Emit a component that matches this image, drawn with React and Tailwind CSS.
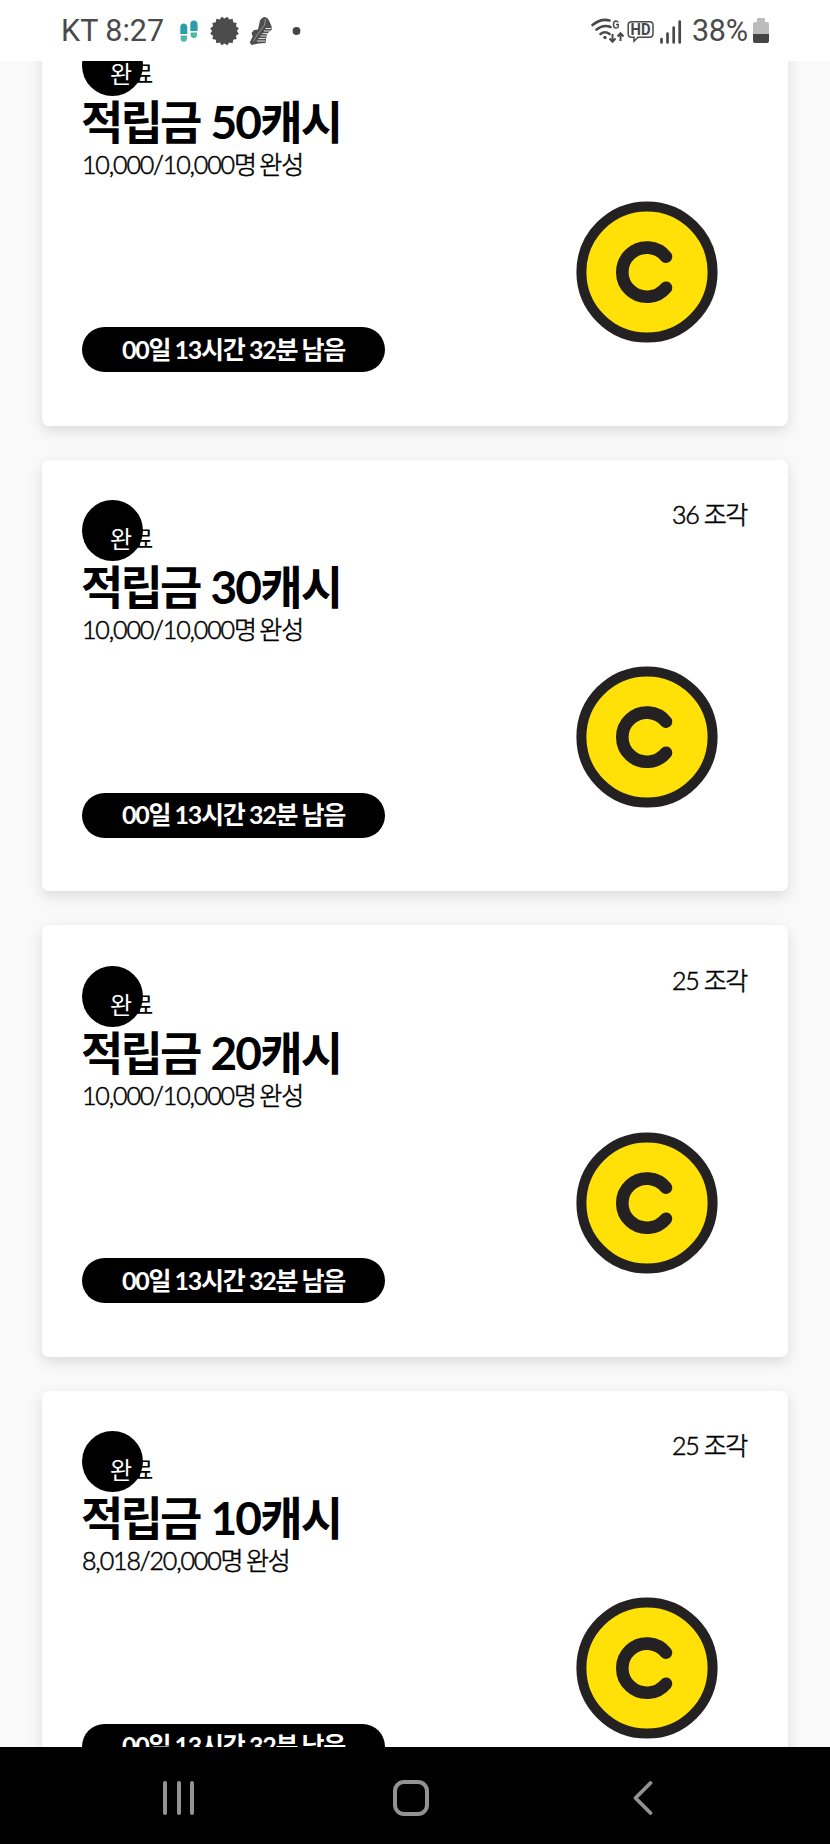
const rewards = [
  { cash: 50, pieces: null, progress: "10,000/10,000" },
  { cash: 30, pieces: 36, progress: "10,000/10,000" },
  { cash: 20, pieces: 25, progress: "10,000/10,000" },
  { cash: 10, pieces: 25, progress: "8,018/20,000" },
];

function Coin() {
  return (
    <svg className="size-[142px]" viewBox="-71 -71 142 142" fill="none">
      <circle r="65.6" fill="#ffe108" stroke="#242122" strokeWidth="10" />
      <path
        d="M19 -15.300A24.600 24.600 0 1 0 19 15.700"
        stroke="#242122"
        strokeWidth="12.600"
        strokeLinecap="round"
      />
    </svg>
  );
}

function RewardCard({ cash, pieces, progress }) {
  return (
    <article className="flex h-[431.8px] shrink-0 justify-between rounded-[7px] bg-white px-10 pt-[40.5px] shadow-[0_5px_14px_rgba(0,0,0,0.12)]">
      <div className="flex flex-col items-start whitespace-nowrap">
        <div className="h-[61px] w-[61px] rounded-full bg-black pt-[21px] pl-[28px] text-[24px] leading-[36px] tracking-[-0.04em] text-black">
          <span className="text-white">완</span>료
        </div>
        <h2 className="-ml-px h-[51px] text-[46px] leading-[51px] font-bold tracking-[-0.04em] [word-spacing:1.5px]">
          <span className="tracking-[-0.06em]">적립금</span> {cash}캐시
        </h2>
        <p className="h-9 text-[25px] leading-[35px] font-light tracking-[-0.046em] [-webkit-text-stroke:0.55px_black] [word-spacing:-2px]">
          {progress}명 완성
        </p>
        <div className="mt-[144.5px] flex h-[45px] w-[303px] items-center justify-center rounded-full bg-black pb-px text-[25px] leading-none font-bold tracking-[-0.05em] text-white [word-spacing:-0.5px]">
          00일 13시간 32분 남음
        </div>
      </div>
      <div className="flex flex-col items-end">
        <p className="mr-px h-[166px] text-[25px] leading-[29px] font-light tracking-[-0.055em] [-webkit-text-stroke:0.55px_black]">
          {pieces && `${pieces} 조각`}
        </p>
        <div className="mr-[30px]">
          <Coin />
        </div>
      </div>
    </article>
  );
}

const badge = Array.from({ length: 32 }, (_, i) => {
  const r = i % 2 ? 12.4 : 14.6;
  const a = ((i + 1) * Math.PI) / 16;
  return `${(r * Math.cos(a)).toFixed(2)},${(r * Math.sin(a)).toFixed(2)}`;
}).join(" ");

function StatusBar() {
  return (
    <header className="flex h-[61px] shrink-0 items-center justify-between bg-white pr-[61px] pl-[61px] font-[Roboto,sans-serif] text-[30.5px] text-[#4a4a4a]">
      <div className="flex items-center">
        <span className="w-[119px] pt-px whitespace-nowrap">KT 8:27</span>
        <svg className="h-[30px] w-[122px]" viewBox="180 15 122 30">
          <g fill="#2c9dac">
            <path d="M180.300 33V26q0-3.500 3.500-3.500T187.300 27v6z" />
            <path d="M190.300 30V23q0-3.500 3.600-3.500T197.600 24v6z" />
          </g>
          <g fill="#50b7a5">
            <path d="M180.600 34.500h6.400v2.700a3.200 3.500 0 0 1-6.400 0z" />
            <path d="M190.600 31.500h6.400v2.200a3.200 3.300 0 0 1-6.400 0z" />
          </g>
          <polygon points={badge} transform="translate(224.500 30)" fill="#4c4c4c" />
          <path
            d="M260 19.500q2-3.500 5-3.500 3 .5 4 3.500l2.500 5.500.3 3.500-5 4.500-1.300 9-7 .5-7 1.500-1.800-2.500 3-6-1.200-3.500 2.500-3 4-.5z"
            fill="#4f4f4f"
          />
          <path
            d="M265.500 27.500h5.500M264 30h6M262.500 32.500h4.500M260.500 35h5.500M258.500 37.500h7M257 40h8"
            stroke="#e2e2e2"
            strokeWidth="1.200"
          />
          <path d="M265.500 18l-1 6-6 8-5 8" fill="none" stroke="#a0a0a0" strokeWidth=".9" />
          <circle cx="296.500" cy="30" r="3.900" fill="#444" />
        </svg>
      </div>
      <div className="flex items-center">
        <svg className="h-[30px] w-[98px]" viewBox="590 15 98 30" fill="none" stroke="#484848">
          <g strokeWidth="2.600" strokeLinecap="round">
            <path d="M592.500 24q9-7 17-4.500M596.500 28.500q7-5.500 14-2.500M600.500 33q4.500-3.500 9 0" />
          </g>
          <circle cx="605" cy="36.500" r="1.700" fill="#484848" stroke="none" />
          <path d="M612.500 33v7.500m-3-3 3 3.300 3-3.300M620.500 40v-7.500m-3 3 3-3.300 3 3.300" strokeWidth="2" />
          <path
            d="M618.200 21.300q-1-1.300-2.300-1.300-2.400 0-2.400 3.500t2.400 3.500q1.900 0 2.300-1v-2.600H616"
            strokeWidth="1.500"
          />
          <path
            d="M631.500 20.700h18q3.500 0 3.500 3.500v8.500q0 3.500-3.500 3.500H638l-4 4v-4h-2.500q-3.300 0-3.300-3.500v-8.500q0-3.500 3.300-3.500z"
            strokeWidth="1.500"
          />
          <text
            x="630.500"
            y="34.300"
            textLength="20"
            lengthAdjust="spacingAndGlyphs"
            className="fill-[#484848] stroke-none font-[Roboto,sans-serif] text-[16px] font-bold"
          >
            HD
          </text>
          <path d="M661.500 38v3.500M667.500 32.500v9M673.700 26.500v15M679.700 20.500v21" strokeWidth="2.700" strokeLinecap="round" />
        </svg>
        <span className="w-[65px] pt-px pl-1 tracking-[-0.3px]">38%</span>
        <div className="flex flex-col items-center">
          <div className="h-1 w-2 rounded-t-[1px] bg-[#bcbcbc]" />
          <div className="h-3 w-4 rounded-t-[2px] bg-[#bcbcbc]" />
          <div className="h-[9px] w-4 rounded-b-[2px] bg-[#454545]" />
        </div>
      </div>
    </header>
  );
}

function NavBar() {
  return (
    <nav className="flex h-[97px] shrink-0 items-center justify-between bg-black pt-[5px] pr-[177px] pl-[163px]">
      <div className="flex gap-[9.5px]">
        <span className="h-[34px] w-1 rounded-full bg-[#929292]" />
        <span className="h-[34px] w-1 rounded-full bg-[#929292]" />
        <span className="h-[34px] w-1 rounded-full bg-[#929292]" />
      </div>
      <span className="mr-[5px] size-9 rounded-[11px] border-4 border-[#929292]" />
      <svg className="h-[34px] w-5" viewBox="0 0 20 34" fill="none">
        <path
          d="M17.500 2L2.500 17l15 15"
          stroke="#929292"
          strokeWidth="3.800"
          strokeLinecap="round"
          strokeLinejoin="round"
        />
      </svg>
    </nav>
  );
}

export default function App() {
  return (
    <div className="flex h-[1844px] w-[830px] flex-col overflow-hidden bg-[#f9f9f9] font-[Lato,'Noto_Sans_CJK_KR',sans-serif] text-black">
      <StatusBar />
      <main className="h-[1686px] overflow-hidden px-[42px]">
        <div className="-mt-[67px] flex flex-col gap-[33.8px]">
          {rewards.map((r) => (
            <RewardCard key={r.cash} {...r} />
          ))}
        </div>
      </main>
      <NavBar />
    </div>
  );
}
